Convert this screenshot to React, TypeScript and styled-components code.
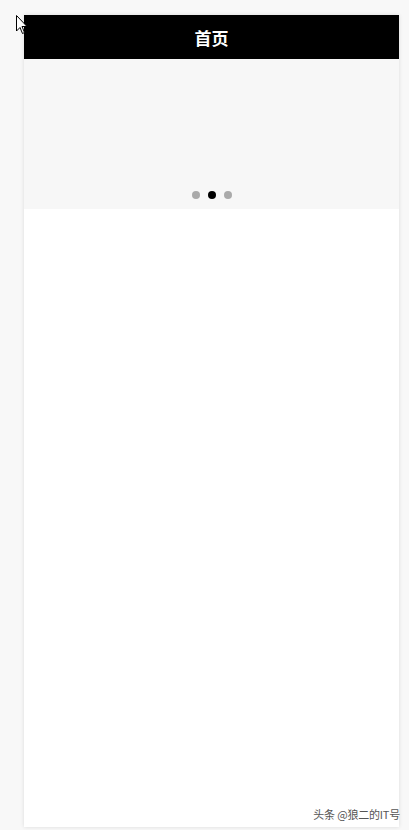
import React from 'react';
import styled, { createGlobalStyle } from 'styled-components';

const GlobalStyle = createGlobalStyle`
  html, body {
    margin: 0;
    padding: 0;
    background: #f8f8f8;
    font-family: "Noto Sans CJK SC", "Liberation Sans", sans-serif;
  }
`;

const Page = styled.div`
  position: relative;
  width: 409px;
  height: 830px;
  padding: 15px 10px 0 24px;
  box-sizing: border-box;
  overflow: hidden;
`;

const Phone = styled.div`
  width: 375px;
  height: 812px;
  background: #fff;
  box-shadow: 0 0 4px rgba(0, 0, 0, 0.12);
  display: flex;
  flex-direction: column;
`;

const Header = styled.header`
  height: 44px;
  background: #000;
  color: #fff;
  display: flex;
  align-items: center;
  justify-content: center;
  font-size: 17px;
  font-weight: 700;
`;

const Banner = styled.div`
  height: 150px;
  background: #f7f7f7;
  display: flex;
  align-items: flex-end;
  justify-content: center;
  padding-bottom: 10px;
  box-sizing: border-box;
`;

const Dots = styled.div`
  display: flex;
  gap: 8px;
`;

const Dot = styled.span<{ $active?: boolean }>`
  width: 8px;
  height: 8px;
  border-radius: 50%;
  background: ${(p) => (p.$active ? '#000' : '#aaa')};
`;

const Watermark = styled.div`
  position: absolute;
  right: 9px;
  bottom: 8px;
  font-size: 11px;
  color: #555;
  letter-spacing: -0.2px;
`;

const Cursor = styled.svg`
  position: absolute;
  left: 16px;
  top: 15px;
`;

export default function App() {
  const slides = [0, 1, 2];
  const current = 1;
  return (
    <>
      <GlobalStyle />
      <Page>
        <Phone>
          <Header>首页</Header>
          <Banner>
            <Dots>
              {slides.map((i) => (
                <Dot key={i} $active={i === current} />
              ))}
            </Dots>
          </Banner>
        </Phone>
        <Watermark>头条 @狼二的IT号</Watermark>
        <Cursor width="12" height="20" viewBox="0 0 12 20">
          <path d="M0.5 0.5 L0.5 16 L4 12.5 L6.5 18.5 L8.5 17.5 L6 11.5 L11 11.5 Z" fill="#fff" stroke="#000" strokeWidth="1" />
        </Cursor>
      </Page>
    </>
  );
}
